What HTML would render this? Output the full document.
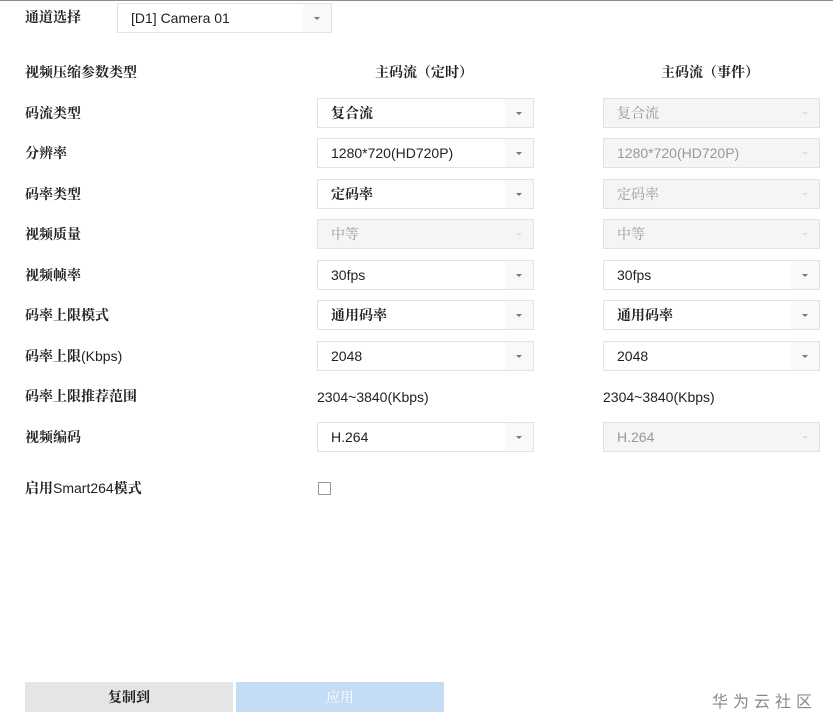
<!DOCTYPE html>
<html><head><meta charset="utf-8"><style>
body{margin:0;width:833px;height:725px;background:#fff;position:relative;overflow:hidden;font-family:"Liberation Sans","Noto Sans CJK SC",sans-serif;color:#222}
.top{position:absolute;left:0;top:0;width:833px;height:1px;background:#8c8c8c}
.lbl{position:absolute;left:25px;font-family:"Liberation Sans","Noto Serif CJK SC",serif;font-size:14px;line-height:20px;color:#222}
.lbl b{font-family:"Noto Serif CJK SC",serif}
.hd{position:absolute;font-family:"Noto Serif CJK SC",serif;font-weight:bold;font-size:14px;line-height:20px}
.sel{position:absolute;width:215px;height:28px;border:1px solid #e2e2e2;background:#fff;font-size:14px;line-height:28px;box-sizing:content-box}
.sel span{position:absolute;left:13px;top:0}
.sel i{position:absolute;right:0;top:0;width:28px;height:28px;background:#f9f9f9}
.sel i:after{content:"";position:absolute;left:11px;top:13px;border-left:3px solid transparent;border-right:3px solid transparent;border-top:3px solid #777}
.sel.d{background:#f5f5f5;color:#999}
.sel.d i{background:#f5f5f5}
.sel.d i:after{border-top-color:#e0e0e0}
.cn{font-family:"Noto Serif CJK SC",serif;font-weight:bold}
.sel.d .cn{font-weight:normal}
.txt{position:absolute;font-size:14px;line-height:20px}
.btn{position:absolute;top:682px;width:208px;height:30px;line-height:30px;text-align:center;font-size:14px}
</style></head><body>
<div class="top"></div>
<div class="lbl" style="top:7px"><b>通道选择</b></div>
<div class="sel" style="left:117px;top:3px;width:213px"><span>[D1] Camera 01</span><i></i></div>

<div class="lbl" style="top:62px"><b>视频压缩参数类型</b></div>
<div class="hd" style="left:375px;top:62px">主码流（定时）</div>
<div class="hd" style="left:661px;top:62px">主码流（事件）</div>

<div class="lbl" style="top:103px"><b>码流类型</b></div>
<div class="sel" style="left:317px;top:98px"><span class="cn">复合流</span><i></i></div>
<div class="sel d" style="left:603px;top:98px"><span class="cn">复合流</span><i></i></div>

<div class="lbl" style="top:143px"><b>分辨率</b></div>
<div class="sel" style="left:317px;top:138px"><span>1280*720(HD720P)</span><i></i></div>
<div class="sel d" style="left:603px;top:138px"><span>1280*720(HD720P)</span><i></i></div>

<div class="lbl" style="top:184px"><b>码率类型</b></div>
<div class="sel" style="left:317px;top:179px"><span class="cn">定码率</span><i></i></div>
<div class="sel d" style="left:603px;top:179px"><span class="cn">定码率</span><i></i></div>

<div class="lbl" style="top:224px"><b>视频质量</b></div>
<div class="sel d" style="left:317px;top:219px"><span class="cn">中等</span><i></i></div>
<div class="sel d" style="left:603px;top:219px"><span class="cn">中等</span><i></i></div>

<div class="lbl" style="top:265px"><b>视频帧率</b></div>
<div class="sel" style="left:317px;top:260px"><span>30fps</span><i></i></div>
<div class="sel" style="left:603px;top:260px"><span>30fps</span><i></i></div>

<div class="lbl" style="top:305px"><b>码率上限模式</b></div>
<div class="sel" style="left:317px;top:300px"><span class="cn">通用码率</span><i></i></div>
<div class="sel" style="left:603px;top:300px"><span class="cn">通用码率</span><i></i></div>

<div class="lbl" style="top:346px"><b>码率上限</b>(Kbps)</div>
<div class="sel" style="left:317px;top:341px"><span>2048</span><i></i></div>
<div class="sel" style="left:603px;top:341px"><span>2048</span><i></i></div>

<div class="lbl" style="top:386px"><b>码率上限推荐范围</b></div>
<div class="txt" style="left:317px;top:387px">2304~3840(Kbps)</div>
<div class="txt" style="left:603px;top:387px">2304~3840(Kbps)</div>

<div class="lbl" style="top:427px"><b>视频编码</b></div>
<div class="sel" style="left:317px;top:422px"><span>H.264</span><i></i></div>
<div class="sel d" style="left:603px;top:422px"><span>H.264</span><i></i></div>

<div class="lbl" style="top:478px"><b>启用</b>Smart264<b>模式</b></div>
<div style="position:absolute;left:318px;top:482px;width:11px;height:11px;border:1px solid #999;background:#fff"></div>

<div class="btn cn" style="left:25px;background:#e5e5e5;color:#222">复制到</div>
<div class="btn cn" style="left:236px;background:#c5dcf5;color:#fff;font-weight:normal">应用</div>
<div style="position:absolute;left:712px;top:688px;font-size:16px;letter-spacing:5px;color:#888;font-family:'Noto Sans CJK SC',sans-serif">华为云社区</div>
</body></html>
